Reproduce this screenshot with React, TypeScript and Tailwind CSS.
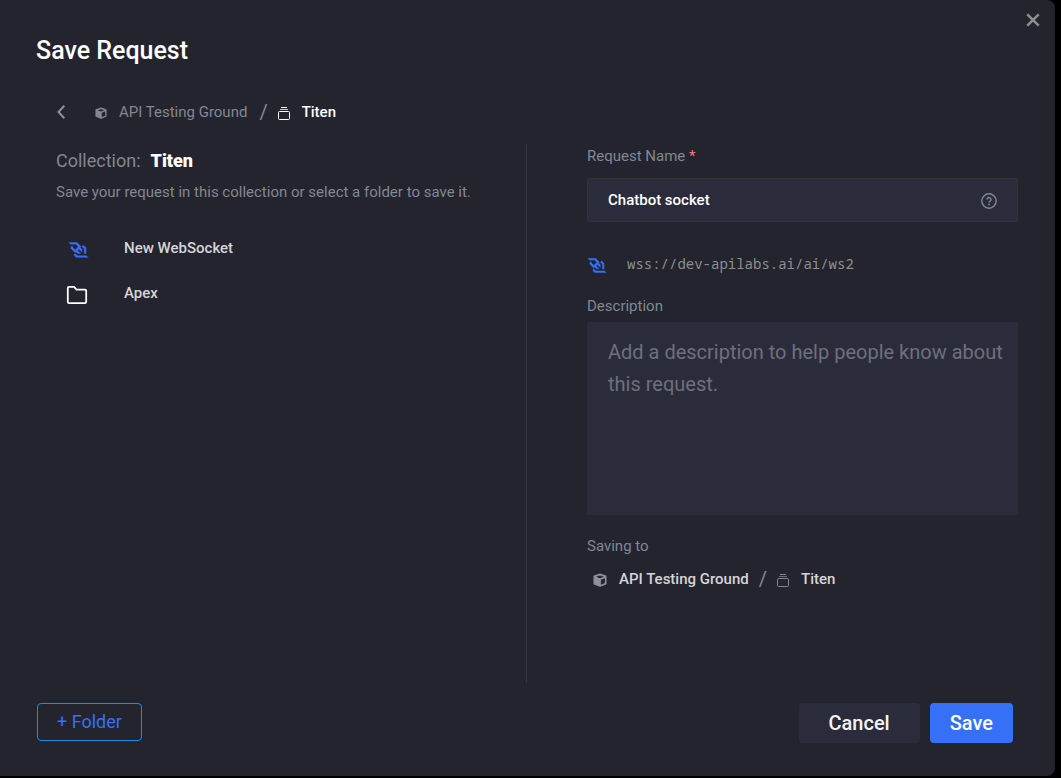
import { useState } from "react";

type IconProps = { className?: string };

function WebSocketIcon({ className = "" }: IconProps) {
  return (
    <svg viewBox="0 0 256 193" className={className} fill="currentColor" aria-hidden="true">
      <path
        d="M192.44 144.645h31.78V68.339l-35.805-35.804-22.472 22.472 26.497 26.497v63.14zm31.864 15.931H113.452L86.954 134.08l11.237-11.236 21.885 21.885h45.028l-44.357-44.441 11.32-11.32 44.357 44.357V88.296l-21.801-21.801 11.152-11.153L110.685 0H0l31.696 31.696v.084H97.436l23.227 23.227-33.96 33.96L63.476 65.74V47.712h-31.78v31.193l55.007 55.007L64.314 156.3l35.805 35.805H256l-31.696-31.529z"
        stroke="#24242f"
        strokeWidth="6"
      />
    </svg>
  );
}

function CubeIcon({ className = "" }: IconProps) {
  return (
    <svg viewBox="0 0 14 14" className={className} aria-hidden="true">
      <path
        d="M7 1.2 12.8 3.2V10.8L7 13 1.2 10.8V3.2Z"
        fill="currentColor"
        stroke="currentColor"
        strokeWidth="1.4"
        strokeLinejoin="round"
      />
      <path d="M3 3.8 7 2.5l4 1.3L7 5.2Z" fill="#24242f" />
      <path d="M7.9 6.7 11.9 5.2v4.9L7.9 11.7Z" fill="#24242f" />
    </svg>
  );
}

function CollectionIcon({ className = "" }: IconProps) {
  return (
    <svg viewBox="0 0 12 13" className={className} fill="none" stroke="currentColor" aria-hidden="true">
      <path d="M3 .5h6" />
      <path d="M2 2.5h8" strokeOpacity=".75" />
      <rect x=".5" y="4.5" width="11" height="8" rx="1" />
    </svg>
  );
}

function FolderIcon({ className = "" }: IconProps) {
  return (
    <svg viewBox="0 0 22 20" className={className} fill="none" stroke="currentColor" aria-hidden="true">
      <path
        d="M1.8 3.2A1.4 1.4 0 0 1 3.2 1.8H8l2.6 2.8h8.2A1.4 1.4 0 0 1 20.2 6v10.8a1.4 1.4 0 0 1-1.4 1.4H3.2a1.4 1.4 0 0 1-1.4-1.4Z"
        strokeWidth="1.8"
        strokeLinejoin="round"
      />
    </svg>
  );
}

function HelpIcon({ className = "" }: IconProps) {
  return (
    <svg viewBox="0 0 16 16" className={className} fill="none" stroke="currentColor" aria-hidden="true">
      <circle cx="8" cy="8" r="7.2" strokeWidth="1.4" />
      <path d="M6 6.6a2 2 0 1 1 3.1 1.6C8.4 8.6 8 8.9 8 9.6" strokeWidth="1.4" />
      <circle cx="8" cy="11.4" r=".9" fill="currentColor" stroke="none" />
    </svg>
  );
}

export default function App() {
  const [name, setName] = useState("Chatbot socket");
  const [description, setDescription] = useState("");

  return (
    <div className="flex min-h-screen bg-black pr-1.5 pb-0.5 font-[Roboto,sans-serif] text-[15px] leading-5 text-[#808891]">
      <main
        role="dialog"
        aria-labelledby="dialog-title"
        className="relative flex flex-1 flex-col rounded-r-lg bg-[#24242f] pt-9 pr-[37px] pb-[33px] pl-9"
      >
        <button type="button" aria-label="Close" className="absolute top-2.5 right-3 p-0.5 text-[#8f8f8f]">
          <svg viewBox="0 0 14 14" className="size-4" stroke="currentColor" strokeWidth="2.2" aria-hidden="true">
            <path d="M2 2l10 10M12 2l-10 10" />
          </svg>
        </button>

        <h1 id="dialog-title" className="text-[25px] leading-[30px] font-medium text-white">
          Save Request
        </h1>

        <nav aria-label="Location" className="mt-[34px] flex h-6 items-center pl-[21px]">
          <button type="button" aria-label="Back" className="text-[#8b929b]">
            <svg viewBox="0 0 8 14" className="h-3.5 w-2" fill="none" stroke="currentColor" strokeWidth="2" aria-hidden="true">
              <path d="M7.3.8 1.5 7l5.8 6.2" />
            </svg>
          </button>
          <a href="#workspace" className="ml-[30px] flex items-center gap-3">
            <CubeIcon className="mt-0.5 size-3" />
            API Testing Ground
          </a>
          <span className="ml-3 text-xl">/</span>
          <a href="#collection" className="ml-2.5 flex items-center gap-3 font-medium text-white">
            <CollectionIcon className="mt-0.5 h-[13px] w-3" />
            Titen
          </a>
        </nav>

        <div className="mt-5 grid flex-1 grid-cols-2">
          <section className="border-r border-[#363637] pl-5">
            <h2 className="mt-[5px] flex items-center gap-2.5 text-lg leading-6">
              Collection: <span className="font-black text-white">Titen</span>
            </h2>
            <p className="mt-[9px]">Save your request in this collection or select a folder to save it.</p>
            <ul className="mt-9 flex flex-col gap-[23px] font-medium text-[#d5d5d9]">
              <li>
                <button type="button" className="flex items-center">
                  <span className="mt-1 flex w-[68px] pl-3 text-[#3670f7]">
                    <WebSocketIcon className="h-4 w-[21px]" />
                  </span>
                  New WebSocket
                </button>
              </li>
              <li>
                <button type="button" className="flex items-center">
                  <span className="mt-1 flex w-[68px] pl-2.5 text-white">
                    <FolderIcon className="h-5 w-[22px]" />
                  </span>
                  Apex
                </button>
              </li>
            </ul>
          </section>

          <section className="flex flex-col pl-[60px]">
            <label htmlFor="request-name" className="mt-0.5">
              Request Name <span className="text-[#f17b82]">*</span>
            </label>
            <div className="mt-3 flex h-11 items-center rounded-xs border border-[#333339] bg-[#2b2c3b] pr-5">
              <input
                id="request-name"
                type="text"
                value={name}
                onChange={(e) => setName(e.target.value)}
                className="h-full min-w-0 flex-1 bg-transparent pl-5 font-medium text-white outline-none"
              />
              <HelpIcon className="mt-0.5 size-4" />
            </div>
            <div className="mt-8 flex items-center gap-5 font-['Noto_Sans_Mono','DejaVu_Sans_Mono',monospace] text-sm leading-5 text-[#8d8e8d]">
              <WebSocketIcon className="mt-0.5 h-[15px] w-5 text-[#3670f7]" />
              wss://dev-apilabs.ai/ai/ws2
            </div>
            <label htmlFor="description" className="mt-[22px]">
              Description
            </label>
            <textarea
              id="description"
              value={description}
              onChange={(e) => setDescription(e.target.value)}
              placeholder="Add a description to help people know about this request."
              className="mt-1.5 h-[193px] resize-none bg-[#2b2c3b] py-3.5 pr-3 pl-[21px] text-xl leading-8 text-white outline-none placeholder:text-[#6d707d]"
            />
            <p className="mt-[21px]">Saving to</p>
            <div className="mt-[11px] flex h-6 items-center pl-1.5">
              <CubeIcon className="mt-0.5 size-3.5 text-[#8b929b]" />
              <span className="ml-3 font-medium text-[#d5d5d9]">API Testing Ground</span>
              <span className="ml-2.5 text-xl">/</span>
              <CollectionIcon className="mt-0.5 ml-2.5 h-[13px] w-3" />
              <span className="ml-3 font-medium text-[#d5d5d9]">Titen</span>
            </div>
          </section>
        </div>

        <footer className="mt-5 flex items-start gap-2.5 pr-[5px] pl-px">
          <button
            type="button"
            className="mr-auto h-[38px] rounded border border-[#1c8de0] px-[19px] text-lg text-[#3670f7]"
          >
            + Folder
          </button>
          <button type="button" className="h-10 rounded bg-[#2b2c3b] px-[30px] text-xl font-medium text-[#f4f4f5]">
            Cancel
          </button>
          <button type="button" className="h-10 rounded bg-[#3670f7] px-5 text-xl font-medium text-white">
            Save
          </button>
        </footer>
      </main>
    </div>
  );
}
